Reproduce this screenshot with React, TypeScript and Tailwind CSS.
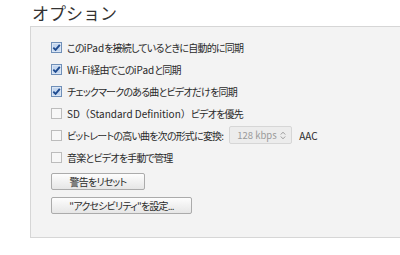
import React from "react";

const Checked = () => (
  <svg width="11" height="11" viewBox="0 0 11 11" className="shrink-0">
    <rect x="0.5" y="0.5" width="10" height="10" fill="#dbe6f4" stroke="#6f8fb8" />
    <rect x="2" y="2" width="7" height="7" fill="#c3d6ef" />
    <path d="M2.3 5.6 L4.6 7.9 L8.8 2.8" fill="none" stroke="#1f4b8f" strokeWidth="1.9" />
  </svg>
);

const Unchecked = () => (
  <svg width="11" height="11" viewBox="0 0 11 11" className="shrink-0">
    <rect x="0.5" y="0.5" width="10" height="10" fill="#f7f7f7" stroke="#bcbcbc" />
  </svg>
);

const L = ({ children }: { children: React.ReactNode }) => (
  <span className="tracking-normal">{children}</span>
);

function Row({ checked, children }: { checked?: boolean; children: React.ReactNode }) {
  return (
    <div className="flex h-[22px] items-center gap-[5px]">
      {checked ? <Checked /> : <Unchecked />}
      <span className="whitespace-nowrap">{children}</span>
    </div>
  );
}

export default function App() {
  return (
    <div
      className="w-[400px] h-[255px] bg-white overflow-hidden text-[#2a2a2a]"
      style={{ fontFamily: '"Noto Sans CJK JP", "Noto Sans", sans-serif' }}
    >
      <div className="pl-[32px] pt-[3px] h-[26px] text-[17px] leading-[20px] text-[#333]">オプション</div>
      <div className="ml-[30px] h-[212px] border border-r-0 border-[#d6d6d6] bg-[#f3f3f3] pl-[20px] pt-[9px] text-[10px] tracking-[-0.8px] [font-feature-settings:'palt']">
        <Row checked>
          この<L>iPad</L>を接続しているときに自動的に同期
        </Row>
        <Row checked>
          <L>Wi-Fi</L>経由でこの<L>iPad</L>と同期
        </Row>
        <Row checked>チェックマークのある曲とビデオだけを同期</Row>
        <Row>
          <L>SD</L>
          <span className="tracking-normal [font-feature-settings:normal]">（</span>
          <L>Standard Definition</L>
          <span className="tracking-normal [font-feature-settings:normal]">）</span>ビデオを優先
        </Row>
        <div className="flex h-[22px] items-center gap-[5px]">
          <Unchecked />
          <span className="whitespace-nowrap">ビットレートの高い曲を次の形式に変換:</span>
          <div className="ml-[1px] flex h-[18px] w-[63px] items-center justify-between rounded-[2px] border border-[#d6d6d6] bg-[#ececec] pl-[7px] pr-[5px] text-[9.5px] text-[#9a9a9a] tracking-normal">
            <span className="whitespace-nowrap">128 kbps</span>
            <svg width="6" height="9" viewBox="0 0 6 9">
              <path d="M0.8 3.5 L3 1.2 L5.2 3.5 M0.8 5.5 L3 7.8 L5.2 5.5" fill="none" stroke="#9a9a9a" strokeWidth="1" />
            </svg>
          </div>
          <span className="ml-[2px] tracking-normal">AAC</span>
        </div>
        <Row>音楽とビデオを手動で管理</Row>
        <div className="mt-[5px] flex h-[17px] w-[94px] items-center justify-center rounded-[2px] border border-[#ababab] bg-gradient-to-b from-[#fdfdfd] to-[#e6e6e6]">
          警告をリセット
        </div>
        <div className="mt-[7px] flex h-[17px] w-[141px] items-center justify-center whitespace-nowrap rounded-[2px] border border-[#ababab] bg-gradient-to-b from-[#fdfdfd] to-[#e6e6e6]">
          "アクセシビリティ"を設定...
        </div>
      </div>
    </div>
  );
}
